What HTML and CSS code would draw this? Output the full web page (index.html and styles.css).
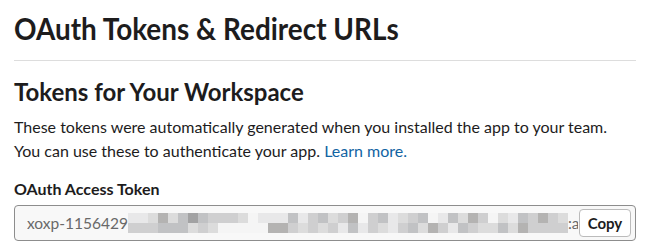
FILE: index.html
```html
<!DOCTYPE html>
<html lang="en">
<head>
  <meta charset="UTF-8">
  <title>OAuth Tokens &amp; Redirect URLs</title>
  <link rel="stylesheet" href="styles.css">
</head>
<body>
  <!-- Page title -->
  <header class="page-header">
    <h1><span class="narrow">OAuth Tokens &amp; Redirect URLs</span></h1>
  </header>

  <!-- Tokens section -->
  <section class="tokens">
    <h2>Tokens for Your Workspace</h2>
    <p class="intro">
      These tokens were automatically generated when you installed the app to your team.<br>
      You can use these to authenticate your app. <a href="#">Learn more.</a>
    </p>

    <label class="field-label">OAuth Access Token</label>
    <div class="token-field">
      <div class="token-text">
        <span class="token-prefix">xoxp-1156429</span><span class="mosaic">
          <i class="s1"></i><i class="s1"></i><i class="s2"></i><i class="s5"></i><i class="s2"></i><i class="s4"></i><i class="s6"></i><i class="s4"></i><i class="s3"></i><i class="s3"></i><i class="s3"></i><i class="s2"></i><i class="s0"></i><i class="s1"></i><i class="s1"></i><i class="s1"></i><i class="s4"></i><i class="s1"></i><i class="s3"></i><i class="s4"></i><i class="s2"></i><i class="s3"></i><i class="s5"></i><i class="s0"></i><i class="s3"></i><i class="s4"></i><i class="s1"></i><i class="s2"></i><i class="s3"></i><i class="s4"></i><i class="s0"></i><i class="s1"></i><i class="s4"></i><i class="s2"></i><i class="s5"></i><i class="s3"></i><i class="s0"></i><i class="s2"></i><i class="s1"></i><i class="s4"></i><i class="s3"></i><i class="s5"></i><i class="s3"></i><i class="s2"></i>
          <i class="s3"></i><i class="s3"></i><i class="s3"></i><i class="s4"></i><i class="s4"></i><i class="s4"></i><i class="s2"></i><i class="s3"></i><i class="s2"></i><i class="s0"></i><i class="s0"></i><i class="s0"></i><i class="s0"></i><i class="s0"></i><i class="s5"></i><i class="s5"></i><i class="s3"></i><i class="s2"></i><i class="s3"></i><i class="s2"></i><i class="s3"></i><i class="s1"></i><i class="s4"></i><i class="s1"></i><i class="s3"></i><i class="s2"></i><i class="s1"></i><i class="s3"></i><i class="s4"></i><i class="s2"></i><i class="s5"></i><i class="s3"></i><i class="s1"></i><i class="s4"></i><i class="s3"></i><i class="s2"></i><i class="s2"></i><i class="s4"></i><i class="s2"></i><i class="s5"></i><i class="s3"></i><i class="s3"></i><i class="s3"></i><i class="s3"></i>
        </span><span class="token-prefix">:a</span>
      </div>
      <button class="copy-btn">Copy</button>
    </div>
  </section>
</body>
</html>
```

FILE: styles.css
```css
/* Base */
* {
  margin: 0;
  padding: 0;
  box-sizing: border-box;
}
body {
  background: #fff;
  color: #1d1c1d;
  font-family: 'Lato', 'Noto Sans', sans-serif;
  padding: 0 16px 0 14px;
}
a {
  color: #1264a3;
  text-decoration: none;
}

/* The title is set a little tighter than stock Lato */
.narrow {
  display: inline-block;
  transform-origin: left center;
  transform: scaleX(0.93);
  white-space: nowrap;
}

/* Title with the grey rule under it */
.page-header {
  padding-top: 10px;
  padding-bottom: 14px;
  border-bottom: 1px solid #dddddd;
}
.page-header h1 {
  font-size: 30px;
  font-weight: 700;
  line-height: 36px;
}

/* Section */
.tokens {
  padding-top: 16px;
}
.tokens h2 {
  font-size: 24px;
  font-weight: 700;
  line-height: 30px;
}
.intro {
  font-size: 16px;
  line-height: 24px;
  margin-top: 8px;
}
.field-label {
  display: block;
  font-size: 16px;
  font-weight: 700;
  line-height: 20px;
  margin-top: 16px;
}

/* Token input with the copy button inside */
.token-field {
  display: flex;
  align-items: center;
  height: 36px;
  margin-top: 6px;
  border: 1px solid #8d8d8d;
  border-radius: 4px;
  background: #f8f8f8;
  padding: 0 4px 0 12px;
}
.token-text {
  flex: 1;
  overflow: hidden;
  white-space: nowrap;
  font-size: 15.5px;
  color: #696969;
  display: flex;
  align-items: center;
}
.token-prefix {
  flex-shrink: 0;
}

/* Pixelated part of the token */
.mosaic {
  flex-shrink: 0;
  display: grid;
  grid-template-columns: repeat(44, 10px);
  grid-template-rows: 10px 10px;
}
.mosaic i { display: block; }
.s0 { background: #f5f5f5; }
.s1 { background: #e8e8e9; }
.s2 { background: #dcdcdc; }
.s3 { background: #cfcfd0; }
.s4 { background: #c1c2c4; }
.s5 { background: #b4b3b2; }
.s6 { background: #a2a2a3; }

.copy-btn {
  flex-shrink: 0;
  height: 28px;
  width: 52px;
  margin-left: 1px;
  border: 1px solid #bbbbbb;
  border-radius: 4px;
  background: #fff;
  color: #1d1c1d;
  font-family: 'Lato', 'Noto Sans', sans-serif;
  font-size: 15px;
  font-weight: 700;
}
```
